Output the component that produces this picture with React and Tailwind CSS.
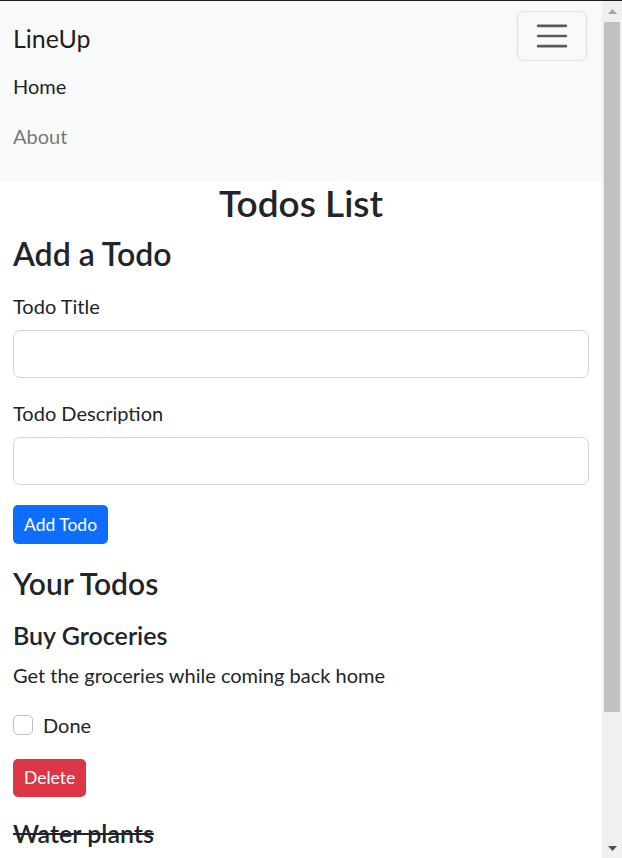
import React, { useState } from "react";

const initialTodos = [
  { id: 1, title: "Buy Groceries", desc: "Get the groceries while coming back home", done: false },
  { id: 2, title: "Water plants", desc: "Water the plants in the balcony", done: true },
];

const Scrollbar = () => (
  <div className="w-[20px] shrink-0 bg-[#f0f0f0] flex flex-col items-center">
    <div className="h-[20px] w-full flex items-center justify-center">
      <svg width="9" height="5" viewBox="0 0 9 5">
        <polygon points="4.5,0 9,5 0,5" fill="#a3a3a3" />
      </svg>
    </div>
    <div className="mt-px h-[690px] w-[16px] bg-[#c1c1c1]" />
    <div className="flex-1" />
    <div className="h-[20px] w-full flex items-center justify-center">
      <svg width="9" height="5" viewBox="0 0 9 5">
        <polygon points="0,0 9,0 4.5,5" fill="#505050" />
      </svg>
    </div>
  </div>
);

export default function App() {
  const [todos, setTodos] = useState(initialTodos);
  const [title, setTitle] = useState("");
  const [desc, setDesc] = useState("");

  const addTodo = (e) => {
    e.preventDefault();
    if (!title) return;
    setTodos([...todos, { id: Date.now(), title, desc, done: false }]);
    setTitle("");
    setDesc("");
  };

  const toggle = (id) =>
    setTodos(todos.map((t) => (t.id === id ? { ...t, done: !t.done } : t)));

  const remove = (id) => setTodos(todos.filter((t) => t.id !== id));

  return (
    <div className="h-[858px] flex flex-col overflow-hidden font-['Lato','Noto_Sans',sans-serif] text-[#212529] bg-white">
      <div className="h-px bg-[#1e1e1e] shrink-0" />
      <div className="flex flex-1 min-h-0">
        <div className="flex-1 min-w-0 overflow-hidden">
          {/* Navbar */}
          <nav className="bg-[#f8f9fa] pt-[10px] pb-[10px] px-[13px]">
            <div className="flex items-center justify-between">
              <a className="text-[25px] leading-[37.5px] pt-[9px] pb-[3px] text-black/90">LineUp</a>
              <button className="w-[70px] h-[50px] border border-black/10 rounded-[7px] flex items-center justify-center mr-[2px]">
                <svg width="38" height="38" viewBox="0 0 30 30">
                  <path
                    d="M4 7h22M4 15h22M4 23h22"
                    stroke="rgba(33,37,41,0.75)"
                    strokeWidth="2"
                    strokeLinecap="round"
                  />
                </svg>
              </button>
            </div>
            <ul className="mb-[10px]">
              <li>
                <a className="block py-[10px] text-[20px] leading-[30px] text-black/90">Home</a>
              </li>
              <li>
                <a className="block py-[10px] text-[20px] leading-[30px] text-black/55">About</a>
              </li>
            </ul>
          </nav>

          <div className="px-[13px]">
            <h1 className="text-center text-[37px] leading-[44px] font-semibold mb-[10px]">Todos List</h1>

            {/* Add form */}
            <h2 className="text-[32px] leading-[38px] font-semibold mb-[18px]">Add a Todo</h2>
            <form onSubmit={addTodo}>
              <div className="mb-[20px]">
                <label className="block text-[20px] leading-[30px] mb-[9px]">Todo Title</label>
                <input
                  value={title}
                  onChange={(e) => setTitle(e.target.value)}
                  className="block w-full h-[48px] border border-[#ced4da] rounded-[7px] px-[15px] text-[20px] outline-none"
                />
              </div>
              <div className="mb-[20px]">
                <label className="block text-[20px] leading-[30px] mb-[9px]">Todo Description</label>
                <input
                  value={desc}
                  onChange={(e) => setDesc(e.target.value)}
                  className="block w-full h-[48px] border border-[#ced4da] rounded-[7px] px-[15px] text-[20px] outline-none"
                />
              </div>
              <button
                type="submit"
                className="h-[39px] px-[11px] rounded-[5px] bg-[#0d6efd] text-white text-[17.5px] leading-[26px]"
              >
                Add Todo
              </button>
            </form>

            {/* Todos */}
            <h3 className="mt-[21px] text-[30px] leading-[36px] font-semibold mb-[19px]">Your Todos</h3>
            {todos.map((todo) => (
              <div key={todo.id} className="mb-[21px]">
                <h5
                  className={`text-[25px] leading-[30px] font-semibold mb-[10px] ${
                    todo.done ? "line-through" : ""
                  }`}
                >
                  {todo.title}
                </h5>
                <p className="text-[20px] leading-[30px] mb-[20px]">{todo.desc}</p>
                <label className="flex items-center gap-[10px] h-[30px] mb-[19px] text-[20px]">
                  <input
                    type="checkbox"
                    checked={todo.done}
                    onChange={() => toggle(todo.id)}
                    className="appearance-none w-[20px] h-[20px] border border-black/25 rounded-[5px] checked:bg-[#0d6efd] checked:border-[#0d6efd]"
                  />
                  <span>Done</span>
                </label>
                <button
                  onClick={() => remove(todo.id)}
                  className="h-[38px] px-[11px] rounded-[5px] bg-[#dc3545] text-white text-[17.5px] leading-[26px]"
                >
                  Delete
                </button>
              </div>
            ))}
          </div>
        </div>
        <Scrollbar />
      </div>
    </div>
  );
}
